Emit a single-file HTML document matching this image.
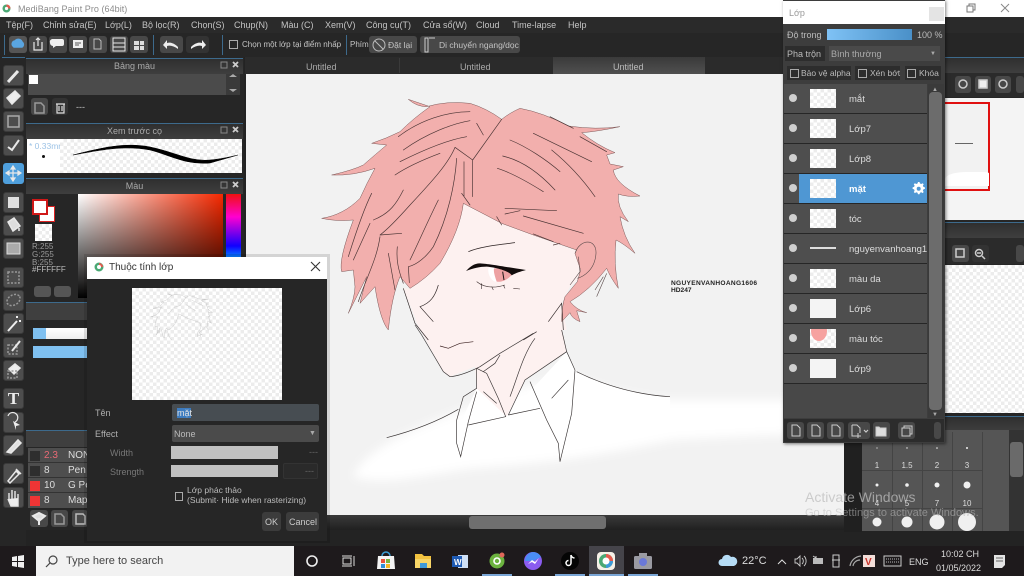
<!DOCTYPE html>
<html><head><meta charset="utf-8"><style>
html,body{margin:0;padding:0;width:1024px;height:576px;overflow:hidden;background:#232323}
body{position:relative;font-family:"Liberation Sans","DejaVu Sans",sans-serif;font-size:9px;color:#c4c4c4;filter:blur(.3px)}
div,span.a{position:absolute;box-sizing:border-box}
.t{position:absolute;white-space:nowrap;line-height:12px}
.chk{background:#fff;background-image:conic-gradient(#ececec 25%,#fff 0 50%,#ececec 0 75%,#fff 0);background-size:7px 7px}
.hd{background:linear-gradient(#2f2f2f,#3f3f3f);border-top:1px solid #3d6a8c;text-align:center;line-height:15px;color:#aaa}
.tb{background:#4d4d4d;border-radius:3px;border:1px solid #3a3a3a}
.btn{background:#484848;border-radius:3px}
.row{left:784px;width:143px;height:30px;background:#4e4e4e;border-bottom:1px solid #262626}
.dot{left:5px;top:10px;width:8px;height:8px;border-radius:50%;background:#cfcfcf}
.th{left:26px;top:5px;width:26px;height:19px}
.nm{position:absolute;left:65px;top:9px;font-size:9.5px;line-height:13px;color:#ddd;white-space:nowrap;width:78px;overflow:hidden}
.cb{border:1px solid #aaa;width:9px;height:9px}
svg{position:absolute;left:0;top:0}
</style></head><body>
<!-- title bar -->
<div style="left:0;top:0;width:1024px;height:17px;background:#fff"></div>
<div class="t" style="left:18px;top:3px;font-size:9px;color:#8c8c8c;letter-spacing:.05px">MediBang Paint Pro (64bit)</div>
<svg width="1024" height="17"><circle cx="6.500" cy="8.500" r="4" fill="#4aa874"/><path d="M6.500,4.500 a4,4 0 0 1 4,4 h-4Z" fill="#e65b4f"/><circle cx="6.500" cy="8.500" r="1.600" fill="#fff"/><path d="M967,6 h6 v6 h-6Z M969,6 v-2 h6 v6 h-2" fill="none" stroke="#777"/><path d="M1001,4 l8,8 m0,-8 l-8,8" stroke="#888" stroke-width="1"/></svg>
<!-- menu -->
<div style="left:0;top:17px;width:1024px;height:16px;background:#2a2a2a"></div>
<div class="t" style="left:6px;top:19px">Tệp(F)</div><div class="t" style="left:43px;top:19px">Chỉnh sửa(E)</div><div class="t" style="left:105px;top:19px">Lớp(L)</div><div class="t" style="left:142px;top:19px">Bộ lọc(R)</div><div class="t" style="left:191px;top:19px">Chọn(S)</div><div class="t" style="left:234px;top:19px">Chụp(N)</div><div class="t" style="left:281px;top:19px">Màu (C)</div><div class="t" style="left:325px;top:19px">Xem(V)</div><div class="t" style="left:366px;top:19px">Công cụ(T)</div><div class="t" style="left:423px;top:19px">Cửa sổ(W)</div><div class="t" style="left:476px;top:19px">Cloud</div><div class="t" style="left:512px;top:19px">Time-lapse</div><div class="t" style="left:568px;top:19px">Help</div>
<!-- toolbar -->
<div style="left:0;top:33px;width:1024px;height:24px;background:#262626"></div>
<div class="btn" style="left:9px;top:36px;width:18px;height:17px;background:#555"></div>
<div class="btn" style="left:29px;top:36px;width:18px;height:17px"></div>
<div class="btn" style="left:49px;top:36px;width:18px;height:17px"></div>
<div class="btn" style="left:69px;top:36px;width:18px;height:17px"></div>
<div class="btn" style="left:89px;top:36px;width:18px;height:17px"></div>
<div class="btn" style="left:110px;top:36px;width:18px;height:17px"></div>
<div class="btn" style="left:130px;top:36px;width:18px;height:17px"></div>
<div class="btn" style="left:160px;top:36px;width:23px;height:17px"></div>
<div class="btn" style="left:186px;top:36px;width:23px;height:17px;background:#333"></div>
<div style="left:4px;top:35px;width:1px;height:20px;background:#3d6a8c"></div><div style="left:153px;top:35px;width:1px;height:20px;background:#3d6a8c"></div><div style="left:222px;top:35px;width:1px;height:20px;background:#3d6a8c"></div><div style="left:346px;top:35px;width:1px;height:20px;background:#3d6a8c"></div>
<div class="cb" style="left:229px;top:40px"></div>
<div class="t" style="left:242px;top:39px;font-size:8px;letter-spacing:.02px">Chọn một lớp tại điểm nhấp</div>
<div class="t" style="left:350px;top:39px;font-size:8px">Phím</div>
<div class="btn" style="left:369px;top:36px;width:48px;height:17px"></div>
<div class="t" style="left:388px;top:39px;font-size:8.500px">Đặt lại</div>
<div class="btn" style="left:420px;top:36px;width:100px;height:17px"></div>
<div class="t" style="left:439px;top:39px;font-size:8.500px">Di chuyển ngang/dọc</div>
<!-- tabs -->
<div style="left:245px;top:57px;width:540px;height:17px;background:#2b2b2b"></div>
<div style="left:553px;top:57px;width:152px;height:17px;background:linear-gradient(#3a3a3a,#505050)"></div>
<div style="left:399px;top:58px;width:1px;height:15px;background:#3a3a3a"></div>
<div class="t" style="left:306px;top:61px;color:#aaa">Untitled</div><div class="t" style="left:460px;top:61px;color:#aaa">Untitled</div><div class="t" style="left:613px;top:61px;color:#bbb">Untitled</div>
<!-- canvas -->
<div style="left:246px;top:74px;width:598px;height:441px;background:#f2f2f2;overflow:hidden"></div>
<svg width="1024" height="576" viewBox="0 0 1024 576">
<defs><filter id="b" x="-10%" y="-20%" width="120%" height="140%"><feGaussianBlur stdDeviation="14"/></filter>
<path id="hr" d="M265,28 Q290,50 320,50 Q380,32 450,40 Q500,55 545,88 Q570,68 600,55 Q670,68 745,108 Q830,120 900,110 Q830,125 785,128 Q830,165 885,188 L860,195 L870,222 L910,230 L880,240 Q885,280 960,318 Q920,322 895,312 Q890,350 925,395 L900,380 Q910,440 945,490 Q910,460 888,450 Q880,520 895,595 Q870,560 860,535 Q810,600 750,635 Q770,660 800,668 L770,662 L780,695 Q755,685 750,668 L725,695 Q725,650 735,620 L772,575 L782,540 L765,490 L770,480 L640,435 L545,400 L430,340 Q420,420 360,520 Q320,565 270,595 L240,560 Q215,620 205,720 Q180,690 165,590 L120,640 L140,560 L85,670 Q105,620 105,590 L100,540 L65,545 Q55,510 100,390 Q50,395 5,385 Q70,375 120,325 Q140,280 165,235 Q100,258 35,255 Q100,240 130,225 Q170,190 200,165 L155,160 Q200,145 240,125 Q280,85 330,50Z"/></defs>
<g transform="translate(340,320) scale(.33333)">
<path d="M40,470 C60,420 120,365 340,280 L550,200 L700,170 C800,210 900,235 1000,240 L1600,240 L1600,330 L1000,360 C850,390 700,425 400,445 C250,465 130,500 40,470Z" fill="#fff" filter="url(#b)"/>
<path d="M370,290 L410,205 L500,290 L680,95 L710,155 C800,200 900,225 990,232 L990,300 L660,370 L380,380 Z" fill="#fff"/>
<path d="M405,140 L410,205 L500,290 L555,180 L680,95 L660,0 L225,0 L310,155 L330,170Z" fill="#fdf1f0"/>
</g>
<g transform="translate(320,90) scale(.33333)">
<path d="M430,340 L545,400 L760,480 L790,450 L830,460 L825,520 L750,590 L725,640 L740,720 L300,720 L250,595 L270,595 L360,520Z" fill="#fdf1f0"/>
<path d="M765,490 C780,445 830,445 828,490 C825,540 790,560 770,565Z" fill="#fdf1f0"/>
<ellipse cx="785" cy="495" rx="16" ry="22" fill="#f8d8d6"/>
<use href="#hr" fill="#f2afad" stroke="#7a5656" stroke-width="1.500"/>
<path d="M690,80 L760,115 M780,140 L860,185 M235,140 C300,90 380,65 450,65 M250,180 C320,130 400,100 450,92 M240,215 C310,180 380,150 440,140 M225,255 C270,225 320,205 360,190 M545,88 L458,210 M490,135 L470,100 M458,210 L405,172 M458,210 L458,320 M432,215 L432,320 M425,310 L450,345 M405,172 C385,220 340,270 270,345 C230,390 200,420 180,435 L245,430 M410,205 C405,280 385,380 340,470 C320,500 290,525 265,530 M355,330 C320,400 290,470 270,510 M250,300 C230,340 210,370 160,390 M155,310 C135,350 110,420 85,500 M150,400 L100,510 M180,440 C170,510 140,560 115,635 M232,470 C228,510 235,540 250,580 M205,490 L225,600 M265,530 L268,578 M640,130 L815,215 M695,180 C750,225 790,270 825,320 M570,150 C620,170 680,210 720,245 M548,198 C600,210 650,240 705,300 M532,235 C580,250 630,280 670,305 M555,355 L710,362 M610,378 L790,430 M555,372 L600,362 M530,380 L545,405 M640,432 L700,455 M700,465 L720,460" fill="none" stroke="#4a3434" stroke-width="2" stroke-linecap="round" stroke-linejoin="round"/>
<path d="M860,550 L830,620 M850,560 L825,600 M765,490 C780,445 830,445 828,490 C825,540 790,560 772,565 M775,500 L780,545 L750,585" fill="none" stroke="#5a4a4a" stroke-width="1.800"/>
<path d="M445,485 C480,470 530,465 585,458" fill="none" stroke="#2a2020" stroke-width="2.200"/>
<path d="M505,535 C520,530 560,535 585,545 C570,565 545,578 525,575 C510,568 503,550 505,535Z" fill="#fff"/>
<path d="M522,535 C550,533 575,540 582,546 C570,565 548,578 530,575 C525,560 520,545 522,535Z" fill="#eda2a3"/>
<path d="M548,545 L552,570" stroke="#1f1616" stroke-width="3"/>
<path d="M438,543 C450,530 462,520 480,520 C510,522 540,528 618,540 C600,545 590,548 575,556 C570,545 530,532 500,530 C480,530 460,535 438,543Z" fill="#120c0c"/>
<path d="M470,575 C500,600 540,590 555,585 M485,580 L485,597 M515,590 L520,600 M550,585 L555,595 M580,595 L600,597" fill="none" stroke="#3a2c2c" stroke-width="1.800"/>
<path d="M250,595 L285,700 L325,750 M355,585 C345,620 330,640 300,650 L340,695 M685,695 L725,640 L730,720 M610,750 L650,725" fill="none" stroke="#2f2626" stroke-width="2"/>
</g>
<g transform="translate(340,320) scale(.33333)" fill="none" stroke="#3a3535" stroke-width="2">
<path d="M225,15 L245,45 L310,155 L330,170 C360,168 390,155 420,140 L480,100 L580,40"/>
<path d="M300,78 L325,85 L360,70 L400,65" stroke="#3a2020"/>
<path d="M410,145 L410,205 L370,230 L350,300 L350,370 L362,410 L385,305 L410,215 M410,145 L440,160 L475,235 L497,290 L385,315 M430,215 L470,250 M430,155 L465,130 L480,105 M585,55 C550,100 530,180 510,230 M505,285 L555,180 L680,95 L705,150 L695,280 L660,425 L655,370 L620,300 L570,185 M505,285 L600,265 M635,235 L685,180 M710,155 C800,200 900,225 990,230 M665,30 L680,95 M140,353 C230,330 300,300 355,268"/>
</g>
<text x="671" y="285" font-family="Liberation Sans" font-size="6.6" font-weight="700" fill="#222" textLength="86">NGUYENVANHOANG1606</text>
<text x="671" y="292" font-family="Liberation Sans" font-size="6.6" font-weight="700" fill="#222">HD247</text>
</svg>
<!-- h scrollbar -->
<div style="left:245px;top:515px;width:620px;height:15px;background:linear-gradient(#3a3a3a,#202020)"></div>
<div style="left:469px;top:516px;width:137px;height:13px;background:#6f6f6f;border-radius:3px"></div>
<div style="left:0;top:530px;width:1024px;height:16px;background:#232323"></div>
<!-- left tool column -->
<div style="left:0;top:57px;width:26px;height:489px;background:#262626"></div>
<div style="left:2px;top:57px;width:23px;height:1px;background:#3d6a8c"></div>
<div class="tb" style="left:3px;top:65px;width:21px;height:21px"></div><div class="tb" style="left:3px;top:88px;width:21px;height:21px"></div><div class="tb" style="left:3px;top:111px;width:21px;height:21px"></div><div class="tb" style="left:3px;top:135px;width:21px;height:21px"></div>
<div class="tb" style="left:3px;top:163px;width:21px;height:21px;background:#4f9fdc;border-color:#4f9fdc"></div>
<div class="tb" style="left:3px;top:192px;width:21px;height:21px"></div><div class="tb" style="left:3px;top:215px;width:21px;height:21px"></div><div class="tb" style="left:3px;top:238px;width:21px;height:21px"></div>
<div class="tb" style="left:3px;top:267px;width:21px;height:21px"></div><div class="tb" style="left:3px;top:290px;width:21px;height:21px"></div><div class="tb" style="left:3px;top:313px;width:21px;height:21px"></div><div class="tb" style="left:3px;top:337px;width:21px;height:21px"></div><div class="tb" style="left:3px;top:360px;width:21px;height:21px"></div>
<div class="tb" style="left:3px;top:388px;width:21px;height:21px"></div><div class="tb" style="left:3px;top:412px;width:21px;height:21px"></div><div class="tb" style="left:3px;top:435px;width:21px;height:21px"></div>
<div class="tb" style="left:3px;top:463px;width:21px;height:21px"></div><div class="tb" style="left:3px;top:487px;width:21px;height:21px"></div>
<div class="t" style="left:5px;top:391px;width:17px;text-align:center;font-family:'Liberation Serif',serif;font-weight:700;font-size:17px;line-height:16px;color:#eee">T</div>
<!-- left panels -->
<div style="left:26px;top:57px;width:218px;height:473px;background:#262626"></div>
<div class="hd" style="left:26px;top:58px;width:217px;height:16px">Bảng màu</div>
<div style="left:28px;top:74px;width:198px;height:21px;background:#4b4b4b"></div>
<div style="left:226px;top:74px;width:14px;height:21px;background:#3a3a3a"></div>
<div style="left:29px;top:75px;width:9px;height:9px;background:#fff"></div>
<div class="btn" style="left:31px;top:98px;width:17px;height:17px"></div><div class="btn" style="left:52px;top:98px;width:16px;height:17px;background:#333"></div>
<div class="t" style="left:76px;top:101px">---</div>
<div class="hd" style="left:26px;top:123px;width:217px;height:16px">Xem trước cọ</div>
<div style="left:27px;top:139px;width:33px;height:34px;background:#fff"></div>
<div class="chk" style="left:60px;top:139px;width:182px;height:34px"></div>
<div class="t" style="left:29px;top:140px;color:#9dc3e6;font-size:8.5px;width:31px;overflow:hidden">* 0.33mm</div>
<div style="left:42px;top:155px;width:3px;height:3px;background:#111;border-radius:50%"></div>
<svg width="1024" height="576"><path d="M73,155 C100,148 125,142 150,147 C175,152 190,162 210,160 C222,159 230,157 238,155 L210,163 C185,165 170,155 150,150 C125,145 100,150 73,155Z" fill="#000" stroke="#000" stroke-width=".6"/></svg>
<div class="hd" style="left:26px;top:178px;width:217px;height:16px">Màu</div>
<div style="left:78px;top:194px;width:145px;height:104px;background:linear-gradient(transparent,#000),linear-gradient(90deg,#fff,#f52800)"></div>
<div style="left:226px;top:194px;width:15px;height:104px;background:linear-gradient(#f01010,#ff00d0 22%,#1000ff 50%,#00d8ff 68%,#00ff80 85%,#20ff20)"></div>
<div style="left:39px;top:206px;width:16px;height:16px;background:#fff;border:1px solid #d22"></div>
<div style="left:32px;top:199px;width:16px;height:16px;background:#fff;border:2px solid #d01818"></div>
<div class="chk" style="left:35px;top:224px;width:17px;height:17px"></div>
<div class="t" style="left:32px;top:243px;font-size:8px;line-height:8px;color:#999;white-space:normal">R:255<br>G:255<br>B:255</div>
<div class="t" style="left:32px;top:265px;font-size:8px;line-height:9px;color:#bbb">#FFFFFF</div>
<div class="btn" style="left:34px;top:286px;width:17px;height:11px;background:#555"></div><div class="btn" style="left:54px;top:286px;width:17px;height:11px;background:#555"></div>
<div style="left:26px;top:302px;width:217px;height:1px;background:#3d6a8c"></div>
<div style="left:26px;top:303px;width:217px;height:17px;background:#3f3f3f"></div>
<div style="left:33px;top:328px;width:60px;height:11px;background:linear-gradient(#fff,#eee)"></div><div style="left:33px;top:328px;width:13px;height:11px;background:#7fc0f0"></div>
<div style="left:33px;top:346px;width:60px;height:12px;background:#7fc0f0"></div>
<div style="left:26px;top:430px;width:217px;height:1px;background:#3d6a8c"></div>
<div style="left:26px;top:431px;width:217px;height:16px;background:#3f3f3f"></div>
<div style="left:28px;top:448px;width:60px;height:15px;background:#4e4e4e;border-bottom:1px solid #333"></div><div style="left:28px;top:463px;width:60px;height:15px;background:#4e4e4e;border-bottom:1px solid #333"></div><div style="left:28px;top:478px;width:60px;height:15px;background:#4e4e4e;border-bottom:1px solid #333"></div><div style="left:28px;top:493px;width:60px;height:15px;background:#4e4e4e"></div>
<div style="left:30px;top:451px;width:10px;height:10px;background:#2e2e2e"></div><div style="left:30px;top:466px;width:10px;height:10px;background:#2e2e2e"></div><div style="left:30px;top:481px;width:10px;height:10px;background:#ef3535"></div><div style="left:30px;top:496px;width:10px;height:10px;background:#ef3535"></div>
<div class="t" style="left:44px;top:450px;font-size:10px;color:#e96a75">2.3</div><div class="t" style="left:68px;top:450px;font-size:10px;color:#ddd">NON</div>
<div class="t" style="left:44px;top:465px;font-size:10px;color:#ddd">8</div><div class="t" style="left:68px;top:465px;font-size:10px;color:#ddd">Pen</div>
<div class="t" style="left:44px;top:480px;font-size:10px;color:#ddd">10</div><div class="t" style="left:68px;top:480px;font-size:10px;color:#ddd">G Pe</div>
<div class="t" style="left:44px;top:495px;font-size:10px;color:#ddd">8</div><div class="t" style="left:68px;top:495px;font-size:10px;color:#ddd">Mapp</div>
<div class="btn" style="left:30px;top:510px;width:18px;height:17px"></div><div class="btn" style="left:51px;top:510px;width:17px;height:17px"></div><div class="btn" style="left:72px;top:510px;width:16px;height:17px"></div>
<!-- tool icons -->
<svg width="1024" height="576" fill="none" stroke="#e8e8e8" stroke-width="1.500">
<path d="M8,82 L18,71" stroke-width="3"/>
<path d="M7,98 L15,91 L20,96 L12,104Z" fill="#eee"/>
<rect x="8" y="116" width="11" height="11" stroke="#aaa"/>
<path d="M8,147 L12,150 L19,140" stroke-width="2"/>
<path d="M13,166 V181 M6,173 H21 M13,166 l-2,3 h4Z M13,181 l-2,-3 h4Z M6,173 l3,-2 v4Z M21,173 l-3,-2 v4Z" fill="#fff" stroke-width="1.200"/>
<rect x="8" y="197" width="11" height="11" fill="#e0e0e0" stroke="none"/>
<path d="M8,222 L14,218 L20,226 L13,231Z M19,228 v3" fill="#ddd"/>
<rect x="7" y="243" width="13" height="11" fill="#aaa" stroke="#ddd" stroke-width="1"/>
<rect x="8" y="272" width="11" height="11" stroke="#999" stroke-dasharray="2 1.500"/>
<ellipse cx="13.500" cy="300" rx="7" ry="5" stroke="#999" stroke-dasharray="2 1.500" transform="rotate(-30 13.500 300)"/>
<path d="M8,331 L17,321 M17,316 v2 M21,321 h-2" stroke="#eee" stroke-width="2"/>
<rect x="8" y="345" width="9" height="9" stroke="#999" stroke-dasharray="2 1.500"/><path d="M12,351 L20,341" stroke-width="2"/>
<path d="M9,369 L15,364 L20,368 L14,374Z" fill="#eee"/><rect x="8" y="371" width="9" height="7" stroke="#999" stroke-dasharray="2 1.500"/>
<path d="M8,416 A5,5 0 1 1 15,422" stroke-width="1.200"/><path d="M13,421 L20,425 L16,426 L16,430Z" fill="#eee" stroke="none"/>
<path d="M7,452 L18,440 L21,443 L11,453Z" fill="#e0e0e0"/>
<path d="M8,481 L16,471 L19,474 L10,483Z M16,469 L21,474"/>
<path d="M9,500 V493 M12,499 V490 M15,499 V491 M18,500 V494 M8,499 L11,506 H18 V498" fill="#eee" stroke-width="1.400"/>
<path d="M33,516 L39,513 L45,516 L39,521Z M39,518 v7" fill="#ddd" stroke-width="2"/>
<path d="M55,514 h6 l3,3 v7 h-9Z M35,103 h6 l3,3 v7 h-9Z" stroke="#999"/>
<path d="M56,104 h9 M57,104 v9 h7 v-9 M59,106 v5 M62,106 v5" stroke="#ddd" stroke-width="1.200"/>
<path d="M76,514 h7 l2,2 v8 h-9Z" stroke="#bbb"/>
<path d="M221,62 h6 v6 h-6Z" stroke="#888" stroke-width="1"/>
<path d="M221,127 h6 v6 h-6Z M221,182 h6 v6 h-6Z" stroke="#888" stroke-width="1"/>
<path d="M233,62 l5,5 m0,-5 l-5,5 M233,127 l5,5 m0,-5 l-5,5 M233,182 l5,5 m0,-5 l-5,5" stroke="#ccc" stroke-width="1.800"/>
<path d="M229,77 l4,-3 4,3Z M229,89 l4,3 4,-3Z" fill="#aaa" stroke="none"/>
<!-- top toolbar icons -->
<path d="M13,46 a3,3 0 0 1 2,-5 a4,4 0 0 1 7,1 a3,3 0 0 1 0,5 h-8Z" fill="#5aa5e0" stroke="#5aa5e0"/>
<path d="M34,42 v8 h8 v-8 M38,46 V38 M36,40 l2,-2 2,2" stroke-width="1.200"/>
<path d="M53,40 h10 a2,2 0 0 1 2,2 v3 a2,2 0 0 1 -2,2 h-6 l-3,2 v-2 a3,3 0 0 1 -3,-3 a3,3 0 0 1 2,-4Z" fill="#eee" stroke="none" transform="translate(-1,-1)"/>
<rect x="73" y="40" width="10" height="8" fill="#eee" stroke="none"/><path d="M75,43 h6 M75,45 h4" stroke="#555" stroke-width="1"/>
<path d="M94,39 h5 l2,2 v8 h-7Z" stroke="#bbb" stroke-width="1"/>
<rect x="113" y="38" width="12" height="13" stroke-width="1"/><path d="M113,43 h12 M113,47 h12" stroke-width="1"/>
<path d="M134,41 h5 v4 h-5Z M140,41 h4 v4 h-4Z M134,46 h5 v4 h-5Z M140,46 h4 v4 h-4Z" fill="#ddd" stroke="none"/>
<path d="M178,47 C174,43 170,42 167,43 V40 L163,45 L167,49 V46 C170,45 174,46 178,49" fill="#eee" stroke="none"/>
<path d="M191,49 C195,46 199,45 202,46 V49 L206,45 L202,40 V43 C199,42 195,43 191,47" fill="#eee" stroke="none"/>
<circle cx="379" cy="45" r="6" stroke="#bbb" stroke-width="1"/><path d="M375,41 L383,49" stroke="#bbb" stroke-width="1"/>
<path d="M425,38 h3 v14 h-3Z M429,38 h6" stroke="#ccc" stroke-width="1"/>
</svg>
<!-- dialog -->
<div style="left:84px;top:254px;width:246px;height:289px;background:rgba(0,0,0,.12)"></div>
<div style="left:87px;top:257px;width:240px;height:284px;background:#262626"></div>
<div style="left:87px;top:257px;width:240px;height:22px;background:#fff"></div>
<div class="t" style="left:109px;top:262px;font-size:10px;color:#333">Thuộc tính lớp</div>
<svg width="1024" height="576"><circle cx="99" cy="267" r="4.500" fill="#4aa874"/><path d="M99,263 a4,4 0 0 1 4,4 h-4Z" fill="#e65b4f"/><circle cx="99" cy="267" r="2" fill="#fff"/><path d="M311,262 l9,9 m0,-9 l-9,9" stroke="#333" stroke-width="1.100"/></svg>
<div class="chk" style="left:132px;top:288px;width:150px;height:112px"></div>
<svg width="1024" height="576"><g transform="translate(151,292) scale(.0640)" fill="none" stroke="#b4b4b4" stroke-width="5"><use href="#hr"/><path d="M250,595 L285,700 L325,750 M545,88 L458,210 L360,240 L270,345 M640,130 L815,215 M548,198 L705,300"/></g></svg>
<div class="t" style="left:95px;top:407px;color:#b0b0b0">Tên</div>
<div style="left:172px;top:404px;width:147px;height:17px;background:#474d52;border-radius:2px"></div>
<div style="left:177px;top:408px;width:14px;height:10px;background:#3d7cc0"></div>
<div class="t" style="left:177px;top:407px;color:#e2e2e2">mặt</div>
<div class="t" style="left:95px;top:428px;color:#b0b0b0">Effect</div>
<div style="left:172px;top:425px;width:147px;height:17px;background:#4b4b4b;border-radius:2px"></div>
<div class="t" style="left:174px;top:428px;color:#bbb">None</div>
<div class="t" style="left:309px;top:428px;font-size:7px;color:#aaa">▼</div>
<div class="t" style="left:110px;top:447px;color:#777">Width</div>
<div style="left:171px;top:446px;width:107px;height:13px;background:#c0c0c0"></div>
<div class="t" style="left:309px;top:446px;color:#666">---</div>
<div class="t" style="left:110px;top:466px;color:#777">Strength</div>
<div style="left:171px;top:465px;width:107px;height:12px;background:#c0c0c0"></div>
<div style="left:283px;top:463px;width:35px;height:16px;background:#2a2a2a;border:1px solid #333;border-radius:2px"></div>
<div class="t" style="left:305px;top:465px;color:#666">---</div>
<div style="left:175px;top:492px;width:8px;height:9px;border:1px solid #aaa"></div>
<div class="t" style="left:187px;top:485px;font-size:8.500px;line-height:10px;color:#bbb">Lớp phác thảo<br>(Submit· Hide when rasterizing)</div>
<div class="btn" style="left:262px;top:512px;width:19px;height:19px;background:#3c3c3c"></div>
<div class="btn" style="left:286px;top:512px;width:33px;height:19px;background:#3c3c3c"></div>
<div class="t" style="left:265px;top:516px;color:#ccc">OK</div>
<div class="t" style="left:289px;top:516px;color:#ccc">Cancel</div>
<!-- right panels -->
<div style="left:945px;top:57px;width:79px;height:473px;background:#262626"></div>
<div class="hd" style="left:945px;top:57px;width:79px;height:16px"></div>
<div style="left:945px;top:73px;width:79px;height:24px;background:#2b2b2b"></div>
<div class="btn" style="left:955px;top:76px;width:16px;height:17px"></div><div class="btn" style="left:975px;top:76px;width:16px;height:17px"></div><div class="btn" style="left:995px;top:76px;width:16px;height:17px"></div><div class="btn" style="left:1016px;top:76px;width:8px;height:17px"></div>
<div style="left:945px;top:98px;width:79px;height:122px;background:#f4f4f4"></div>
<div style="left:945px;top:102px;width:45px;height:89px;border:2px solid #e01010;border-left:0;background:#f2f2f2"></div>
<div style="left:955px;top:143px;width:18px;height:1px;background:#666"></div>
<div style="left:945px;top:172px;width:44px;height:14px;background:#fff;border-radius:50% 10% 0 0"></div>
<div class="hd" style="left:945px;top:222px;width:79px;height:16px"></div>
<div style="left:945px;top:238px;width:79px;height:26px;background:#2b2b2b"></div>
<div class="btn" style="left:952px;top:245px;width:17px;height:17px"></div><div class="btn" style="left:972px;top:245px;width:17px;height:17px;background:#333"></div><div class="btn" style="left:1016px;top:245px;width:8px;height:17px"></div>
<div class="chk" style="left:945px;top:265px;width:79px;height:148px"></div>
<div class="hd" style="left:945px;top:416px;width:79px;height:16px"></div>
<!-- brush size -->
<div style="left:844px;top:432px;width:18px;height:100px;background:#202020"></div>
<div style="left:862px;top:430px;width:147px;height:101px;background:#555"></div>
<div style="left:1009px;top:430px;width:15px;height:101px;background:#333"></div>
<div style="left:1010px;top:442px;width:13px;height:35px;background:#6a6a6a;border-radius:3px"></div>
<div style="left:892px;top:432px;width:1px;height:99px;background:#444"></div><div style="left:922px;top:432px;width:1px;height:99px;background:#444"></div><div style="left:952px;top:432px;width:1px;height:99px;background:#444"></div><div style="left:982px;top:432px;width:1px;height:99px;background:#444"></div>
<div style="left:862px;top:470px;width:120px;height:1px;background:#444"></div><div style="left:862px;top:508px;width:120px;height:1px;background:#444"></div>
<svg width="1024" height="576" fill="#f0f0f0">
<circle cx="877" cy="448" r=".6"/><circle cx="907" cy="448" r=".7"/><circle cx="937" cy="448" r=".8"/><circle cx="967" cy="448" r="1"/>
<circle cx="877" cy="485" r="1.500"/><circle cx="907" cy="485" r="1.800"/><circle cx="937" cy="485" r="2.500"/><circle cx="967" cy="485" r="3.500"/>
<circle cx="877" cy="522" r="4.500"/><circle cx="907" cy="522" r="5.500"/><circle cx="937" cy="522" r="7.500"/><circle cx="967" cy="522" r="9"/>
<g font-family="Liberation Sans" font-size="8" fill="#ddd" text-anchor="middle"><text x="877" y="468">1</text><text x="907" y="468">1.5</text><text x="937" y="468">2</text><text x="967" y="468">3</text><text x="877" y="506">4</text><text x="907" y="506">5</text><text x="937" y="506">7</text><text x="967" y="506">10</text></g>
<g fill="none" stroke="#ccc" stroke-width="1.500"><circle cx="963" cy="84" r="4"/><circle cx="1003" cy="84" r="4"/><rect x="979" y="80" width="8" height="8" fill="#eee"/><rect x="956" y="249" width="8" height="8"/><circle cx="979" cy="253" r="3.500"/><path d="M982,256 l3,3 M977,253 h4"/></g>
</svg>
<!-- layer panel -->
<div style="left:783px;top:0;width:162px;height:443px;background:#3d3d3d;box-shadow:1px 1px 3px rgba(0,0,0,.5)"></div>
<div style="left:783px;top:1px;width:162px;height:23px;background:#fff"></div>
<div class="t" style="left:789px;top:7px;color:#999">Lớp</div>
<div style="left:929px;top:7px;width:15px;height:14px;background:#e4e4e4"></div>
<div class="t" style="left:787px;top:29px;color:#bbb">Độ trong</div>
<div style="left:827px;top:29px;width:85px;height:11px;background:linear-gradient(90deg,#7fc2f5,#4a90c8)"></div>
<div class="t" style="left:917px;top:29px;color:#bbb">100 %</div>
<div style="left:785px;top:46px;width:40px;height:15px;background:#2d2d2d"></div>
<div class="t" style="left:787px;top:48px;color:#bbb">Pha trộn</div>
<div style="left:829px;top:46px;width:111px;height:15px;background:#4a4a4a"></div>
<div class="t" style="left:831px;top:48px;color:#aaa">Bình thường</div>
<div class="t" style="left:930px;top:48px;font-size:6px;color:#aaa">▼</div>
<div style="left:787px;top:66px;width:64px;height:14px;background:#2d2d2d"></div><div style="left:855px;top:66px;width:45px;height:14px;background:#2d2d2d"></div><div style="left:905px;top:66px;width:36px;height:14px;background:#2d2d2d"></div>
<div class="cb" style="left:790px;top:69px"></div><div class="t" style="left:801px;top:67px;color:#bbb;font-size:8.500px">Bảo vệ alpha</div>
<div class="cb" style="left:858px;top:69px"></div><div class="t" style="left:870px;top:67px;color:#bbb;font-size:8.500px">Xén bớt</div>
<div class="cb" style="left:907px;top:69px"></div><div class="t" style="left:919px;top:67px;color:#bbb;font-size:8.500px">Khóa</div>
<div style="left:784px;top:84px;width:143px;height:334px;background:#484848"></div>
<div class="row" style="top:84px"><div class="dot"></div><div class="th chk"></div><span class="nm">mắt</span></div>
<div class="row" style="top:114px"><div class="dot"></div><div class="th chk"></div><span class="nm">Lớp7</span></div>
<div class="row" style="top:144px"><div class="dot"></div><div class="th chk"></div><span class="nm">Lớp8</span></div>
<div class="row" style="top:174px"><div style="left:15px;top:0;width:128px;height:29px;background:#4f97d3"></div><div class="dot"></div><div class="th chk"></div><span class="nm" style="color:#fff;font-weight:700">mặt</span></div>
<div class="row" style="top:204px"><div class="dot"></div><div class="th chk"></div><span class="nm">tóc</span></div>
<div class="row" style="top:234px"><div class="dot"></div><div style="left:26px;top:13px;width:26px;height:2px;background:#ddd"></div><span class="nm">nguyenvanhoang1606</span></div>
<div class="row" style="top:264px"><div class="dot"></div><div class="th chk"></div><span class="nm">màu da</span></div>
<div class="row" style="top:294px"><div class="dot"></div><div class="th" style="background:#f4f4f4"></div><span class="nm">Lớp6</span></div>
<div class="row" style="top:324px"><div class="dot"></div><div class="th chk" style="overflow:hidden"><div style="left:1px;top:-8px;width:16px;height:20px;border-radius:50%;background:#f6a2a0"></div></div><span class="nm">màu tóc</span></div>
<div class="row" style="top:354px"><div class="dot"></div><div class="th" style="background:#f4f4f4"></div><span class="nm">Lớp9</span></div>
<div style="left:928px;top:84px;width:16px;height:334px;background:#3a3a3a"></div>
<div style="left:929px;top:92px;width:13px;height:318px;background:#6c6c6c;border-radius:4px"></div>
<div class="t" style="left:932px;top:84px;font-size:6px;color:#aaa">▲</div><div class="t" style="left:932px;top:409px;font-size:6px;color:#aaa">▼</div>
<div style="left:784px;top:419px;width:160px;height:23px;background:#2c2c2c"></div>
<div class="btn" style="left:787px;top:422px;width:17px;height:17px"></div><div class="btn" style="left:807px;top:422px;width:17px;height:17px"></div><div class="btn" style="left:827px;top:422px;width:17px;height:17px"></div><div class="btn" style="left:848px;top:422px;width:22px;height:17px"></div><div class="btn" style="left:873px;top:422px;width:17px;height:17px"></div><div class="btn" style="left:898px;top:422px;width:17px;height:17px"></div><div class="btn" style="left:934px;top:422px;width:7px;height:17px"></div>
<svg width="1024" height="576" fill="none" stroke="#ccc" stroke-width="1">
<path d="M792,425 h5 l3,3 v8 h-8Z M812,425 h5 l3,3 v8 h-8Z M832,425 h5 l3,3 v8 h-8Z M852,425 h5 l3,3 v5 M852,425 v11 h5 M858,433 v5 M856,436 h5"/>
<path d="M876,427 h3 l1,1 h6 v8 h-10Z" fill="#ddd"/><path d="M902,428 h8 v8 h-8Z M904,428 v-2 h8 v8 h-2"/>
<path d="M864,430 l2,2 2,-2" stroke-width="1.200"/>
<path fill="#fff" stroke="none" d="M918,182 l1.500,0 .5,1.500 1.300,.5 1.300,-.8 1.100,1.100 -.8,1.300 .5,1.300 1.500,.5 v1.500 l-1.500,.5 -.5,1.300 .8,1.300 -1.100,1.100 -1.300,-.8 -1.300,.5 -.5,1.500 h-1.500 l-.5,-1.500 -1.300,-.5 -1.300,.8 -1.100,-1.100 .8,-1.300 -.5,-1.300 -1.500,-.5 v-1.500 l1.500,-.5 .5,-1.300 -.8,-1.300 1.100,-1.100 1.300,.8 1.300,-.5Z"/>
<circle cx="918.700" cy="188.700" r="2" fill="#4f97d3" stroke="none"/>
</svg>
<!-- activate -->
<div class="t" style="left:805px;top:490px;font-size:14px;line-height:15px;color:rgba(190,190,190,.75)">Activate Windows</div>
<div class="t" style="left:805px;top:507px;font-size:11px;color:rgba(190,190,190,.55)">Go to Settings to activate Windows.</div>
<!-- taskbar -->
<div style="left:0;top:546px;width:1024px;height:30px;background:#1e1a1c"></div>
<div style="left:36px;top:546px;width:258px;height:30px;background:#f2f2f2"></div>
<div class="t" style="left:66px;top:555px;font-size:11px;color:#444">Type here to search</div>
<div style="left:589px;top:546px;width:35px;height:30px;background:#45444a"></div>
<div style="left:555px;top:574px;width:30px;height:2px;background:#7aa6d6"></div><div style="left:589px;top:574px;width:35px;height:2px;background:#7aa6d6"></div><div style="left:628px;top:574px;width:30px;height:2px;background:#7aa6d6"></div><div style="left:482px;top:574px;width:30px;height:2px;background:#7aa6d6"></div>
<svg width="1024" height="576">
<path d="M12,557 l5,-1 v5 h-5Z M18,556 l6,-1 v6 h-6Z M12,562 h5 v5 l-5,-1Z M18,562 h6 v6 l-6,-1Z" fill="#f0f0f0"/>
<circle cx="53" cy="560" r="4" fill="none" stroke="#444" stroke-width="1.200"/><path d="M50,563 l-4,4" stroke="#444" stroke-width="1.200"/>
<circle cx="312" cy="561" r="5" fill="none" stroke="#eee" stroke-width="1.600"/>
<path d="M342,556 h10 M342,566 h10" stroke="#ddd"/><rect x="343" y="558" width="8" height="6" fill="none" stroke="#ddd"/><path d="M354,556 v10" stroke="#ddd"/>
<path d="M378,556 h16 l1,13 h-18Z" fill="#f4f4f4"/><path d="M382,556 a4,4 0 0 1 8,0" fill="none" stroke="#3a9fd6" stroke-width="1.500"/><rect x="381" y="559" width="4" height="4" fill="#e8533c"/><rect x="386" y="559" width="4" height="4" fill="#7ab53f"/><rect x="381" y="564" width="4" height="4" fill="#2f8fd9"/><rect x="386" y="564" width="4" height="4" fill="#f5b824"/>
<path d="M415,554 h7 l2,2 h7 v12 h-16Z" fill="#f3c340"/><rect x="415" y="559" width="16" height="9" fill="#f8d668"/><rect x="420" y="563" width="7" height="5" fill="#3f9ad8"/>
<rect x="458" y="555" width="10" height="13" fill="#cfe0f6"/><rect x="452" y="556" width="10" height="11" fill="#1f5bb4"/>
<text x="454" y="565" font-family="Liberation Sans" font-size="8" font-weight="700" fill="#fff">W</text>
<circle cx="497" cy="561" r="7.500" fill="#6cb33f"/><circle cx="497" cy="561" r="3" fill="none" stroke="#fff" stroke-width="1.600"/><circle cx="502" cy="555" r="2.500" fill="#e0685a"/>
<circle cx="533" cy="561" r="9" fill="#8b5cf0"/><path d="M525,561 a9,9 0 0 1 8,-9 a9,9 0 0 1 8,5 L533,561Z" fill="#4a8df5"/><path d="M528,564 l4,-4 3,2 4,-4 -4,6 -3,-2Z" fill="#fff"/>
<circle cx="570" cy="561" r="9" fill="#050505"/><path d="M571,555 v8 a2.500,2.500 0 1 1 -2.500,-2.500 M571,555 a4,4 0 0 0 3.500,3" fill="none" stroke="#fff" stroke-width="1.500"/>
<rect x="597" y="552" width="18" height="18" rx="4" fill="#f6f1e8"/><circle cx="606" cy="561" r="7" fill="#4aa874"/><path d="M606,554 a7,7 0 0 1 7,7 h-7Z" fill="#e65b4f"/><path d="M606,561 h7 a7,7 0 0 1 -7,7Z" fill="#3e9ad8"/><circle cx="606" cy="561" r="3.500" fill="#fff"/>
<rect x="634" y="556" width="18" height="13" rx="1.500" fill="#9a9aa2"/><rect x="639" y="553" width="8" height="4" fill="#9a9aa2"/><circle cx="643" cy="562" r="4" fill="#6a78d8"/>
<path d="M722,566 a3.500,3.500 0 0 1 0,-7 a5,5 0 0 1 9,-2 a4,4 0 0 1 3,9Z" fill="#b6dcf6"/>
<path d="M778,564 l4,-4 4,4" fill="none" stroke="#ddd"/>
<path d="M795,559 h2 l3,-3 v10 l-3,-3 h-2Z M802,558 a4,4 0 0 1 0,6 M804,556 a7,7 0 0 1 0,10" fill="none" stroke="#ccc" stroke-width=".9"/>
<rect x="813" y="558" width="10" height="6" fill="#bbb"/><path d="M813,556 l3,2 v-2" stroke="#ccc" fill="none"/>
<rect x="833" y="555" width="6" height="12" fill="none" stroke="#ccc"/><path d="M832,560 h8" stroke="#ccc"/>
<path d="M850,566 a12,12 0 0 1 11,-10 M853,566 a7,7 0 0 1 7,-6" fill="none" stroke="#aaa" stroke-width="1.200"/>
<rect x="863" y="555" width="12" height="12" fill="#f3ded9"/><text x="865" y="565" font-family="Liberation Sans" font-size="10" font-weight="700" fill="#c9322b">V</text>
<rect x="884" y="556" width="17" height="10" fill="none" stroke="#ccc"/><path d="M886,559 h13 M886,562 h13" stroke="#bbb" stroke-dasharray="1 1"/>
<path d="M994,555 h11 v10 l-3,3 h-8Z" fill="#e4e4e4"/><path d="M996,558 h7 M996,561 h7" stroke="#666"/>
</svg>
<div class="t" style="left:742px;top:555px;font-size:11px;color:#ddd">22°C</div>
<div class="t" style="left:909px;top:556px;font-size:9px;color:#ddd">ENG</div>
<div class="t" style="left:941px;top:548px;font-size:9px;color:#ddd">10:02 CH</div>
<div class="t" style="left:936px;top:562px;font-size:9px;color:#ddd">01/05/2022</div>
</body></html>
